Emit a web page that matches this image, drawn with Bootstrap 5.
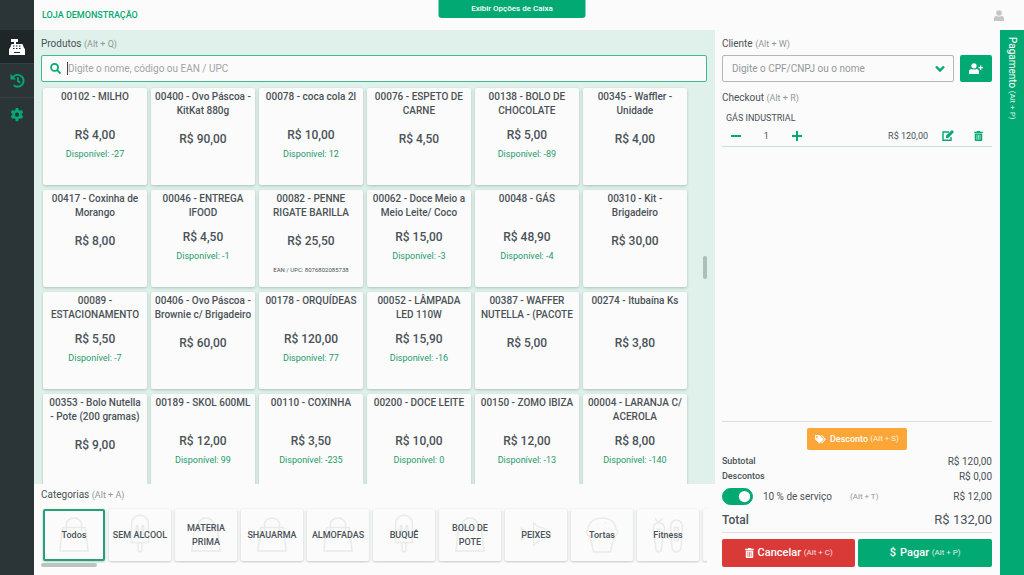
<!DOCTYPE html>
<html lang="pt-BR">
<head>
<meta charset="utf-8">
<meta name="viewport" content="width=device-width, initial-scale=1">
<title>Loja Demonstração - Frente de Caixa</title>
<link href="https://cdn.jsdelivr.net/npm/bootstrap@5.3.0/dist/css/bootstrap.min.css" rel="stylesheet">
<style>
:root{--brand:#03a973;--mint:#dff1ea;--paper:#fbfbfb;--ink:#4a5257;--dim:#92989a}
body{font-family:Roboto,"Liberation Sans",sans-serif;font-size:10px;line-height:14px;color:var(--ink);background:var(--paper)}
button{font-family:inherit;color:inherit}
svg{display:block;fill:currentColor}
.brand{color:var(--brand)}
.rail{width:34px;background:#2b3538}
.rail a{height:34px;color:var(--brand);border-bottom:1px solid #354145}
.rail a.on{background:#1e2628;color:#fff}
.rail-top{height:30px}
.topbar{height:30px}
.store{font-size:9px;font-weight:500}
.drawer-btn{width:147px;height:18px;border:0;border-radius:0 0 3px 3px;background:var(--brand);color:#fff;font-size:8px;font-weight:500;line-height:18px}
.keys{font-size:8px;color:var(--dim);font-weight:400}
.lbl{font-size:10px;font-weight:400;line-height:14px;margin:0}
.lbl .keys{font-size:9px}
.panel{padding-left:7px;padding-right:8px}
.panel>.lbl,.checkout>label{padding-top:7px;padding-bottom:4px}
.products{background:var(--mint)}
.field{height:27px;border-radius:2px;font-size:10px;line-height:14px;background:var(--paper);color:var(--dim)}
.field::placeholder{color:#a0a4a6;opacity:1}
.field:focus{box-shadow:none}
.search{border:1px solid #43b891;padding:0 8px 0 26px}
.search:focus{border-color:#43b891;background:var(--paper)}
.customer{border:1px solid #b4b7b9;padding:0 26px 0 9px;background-image:none}
.in-icon{position:absolute;top:8px}
.caret-line{position:absolute;left:26px;top:7px;width:1px;height:13px;background:#444}
.scroller{padding-top:6px}
.items{display:grid;grid-template-columns:repeat(6,minmax(0,1fr));grid-auto-rows:97px;gap:5px 4px;padding:0 20px 0 2px}
.tile{background:var(--paper);border:0;border-radius:2px;box-shadow:0 1px 3px rgba(30,70,60,.28);padding:0}
.item{display:flex;flex-direction:column;align-items:center;padding-top:2px;font-weight:500;white-space:nowrap}
.item span{height:28px}
.item b{font-size:12px;font-weight:500;line-height:16px;margin-top:13px}
.item.stock b{margin-top:9px}
.item em{font-style:normal;font-weight:400;font-size:9px;line-height:12px;margin-top:5px;color:#1f9a6b}
.item small{font-size:6px;font-weight:400;line-height:8px;margin-top:17px}
.thumb{width:4px;height:23px;border-radius:2px;background:#adbfb9;position:absolute;right:8px;top:226px}
.categories{padding-top:4px;padding-bottom:8px}
.cats{gap:4px;padding:3px 2px 2px}
.cat{flex:0 0 62px;height:52px;font-size:9px;font-weight:500;position:relative}
.cat svg{position:absolute;left:15px;top:5px;width:32px;height:40px;fill:none;stroke:#e9ebeb;stroke-width:1.6}
.cat span{position:relative}
.cat.on{border:2px solid #25a078}
.cat.on svg{left:13px;top:3px}
.hbar{width:56px;height:4px;border-radius:2px;background:#bcc4c2}
.checkout{width:28.8%;padding:0 8px 8px 7px}
.btn-x{border:0;border-radius:2px;color:#fff;font-size:11px;font-weight:500;display:flex;align-items:center;justify-content:center}
.btn-x .keys{color:inherit;opacity:.85}
.cli{gap:6px}
.add{width:32px;height:27px;background:var(--brand)}
.chk{padding:9px 0 6px}
.prod{font-size:9px}
.qty{border-bottom:1px solid #bfe4d8;font-size:9px;height:22px;padding:0 9px}
.qty button{border:0;background:none;padding:0;color:var(--brand)}
.qty output{width:51px;text-align:center}
.qty .edit{margin:0 20px 0 14px}
.sum{border-top:1px solid #dcdfe0;padding:6px 0 4px}
.off{width:100px;height:22px;background:#fba637;font-size:9px}
.row-line{display:flex;justify-content:space-between;line-height:15px}
.row-line dt{font-size:9px;font-weight:500}
.row-line dd{margin:0;font-size:10px}
.sw{min-height:0;height:24px;padding:0;margin:0}
.sw .form-check-input{width:31px;height:17px;margin:0 10px 0 0;float:none;border-color:var(--brand);background-color:var(--brand)}
.sw label{font-size:10px}
.sw .keys{margin-left:18px}
.row-line.total{line-height:24px;border-bottom:1px solid #dcdfe0}
.row-line.total dt{font-size:12px}
.row-line.total dd{font-size:13px}
.acts{gap:3px;padding-top:6px}
.act{height:28px;flex:1}
.act.no{background:#d93a37}
.act.ok{background:var(--brand)}
.pay{width:24px;background:var(--brand);color:#fff;writing-mode:vertical-rl;padding:7px 0 0;border:0;text-align:left;line-height:24px;font-size:10px}
.pay .keys{color:#d5f2e7}
.account{color:#c4c6c7;padding-right:20px}
</style>
</head>
<body>
<svg width="0" height="0" class="position-absolute" aria-hidden="true">
  <symbol id="bag" viewBox="0 0 34 42"><path d="M5 14h24l3 25H2zM9 19v-8a8 7 0 0 1 16 0v8"/></symbol>
  <symbol id="pop" viewBox="0 0 34 42"><path d="M8 30V10a9 9 0 0 1 18 0v20zM15 30v8a2 2 0 0 0 4 0v-8M13 22v-9a1 1 0 0 1 2 0v9M19 22v-9a1 1 0 0 1 2 0v9"/></symbol>
  <symbol id="fish" viewBox="0 0 40 42"><path d="M1 13l8 6 8-2V7l6 5q11 2 16 9-5 7-16 9l-6 5V25l-8-2-8 6 4-8z"/></symbol>
  <symbol id="cake" viewBox="0 0 34 42"><path d="M4 23a4 4 0 0 1-2-7C3 8 9 4 17 4s14 4 15 12a4 4 0 0 1-2 7l-4 17H8zM4 23h26M12 11h1M20 9h1M24 15h1"/></symbol>
  <symbol id="veg" viewBox="0 0 34 42"><path d="M7 9c-5 0-6 4-5 9l2 18a3 4 0 0 0 6 0l3-18c1-5-1-9-6-9zM7 9L3 4M7 9l4-5M26 6c-5 0-7 5-6 10l1 18a5 6 0 0 0 10 0l1-18c1-5-1-10-6-10zM5 16h4M24 14h4v14h-4z"/></symbol>
  <symbol id="trash" viewBox="0 0 14 16"><path fill-rule="evenodd" d="M5 0h4l1 1h4v2H0V1h4zM1 4h12v10.500q0 1.500-1.500 1.500h-9Q1 16 1 14.500zM4 6v8h1V6zm2.500 0v8h1V6zM9 6v8h1V6z"/></symbol>
</svg>
<div class="d-flex vh-100 overflow-hidden">
  <nav class="rail flex-shrink-0" aria-label="Principal">
    <div class="rail-top"></div>
    <a href="#caixa" class="on d-flex align-items-center justify-content-center" aria-label="Caixa"><svg width="16" height="16" viewBox="0 0 16 16"><path fill-rule="evenodd" d="M2 0h7v3H7v2h6.500L15 9l1 1v6H0v-6l1-1 1.500-4H5V3H2zM4 6.500v1h1.500v-1zm3 0v1h1.500v-1zm3 0v1h1.500v-1zM4 9v1h1.500V9zm3 0v1h1.500V9zm3 0v1h1.500V9zM5 13v1h6v-1z"/></svg></a>
    <a href="#historico" class="d-flex align-items-center justify-content-center" aria-label="Histórico"><svg width="15" height="15" viewBox="0 0 16 16"><path fill="none" stroke="currentColor" stroke-width="2" d="M3.200 4.500A6.300 6.300 0 1 1 4 13M8.500 4.500v4l2.500 1.800"/><path d="M.5.8v6h6z"/></svg></a>
    <a href="#config" class="d-flex align-items-center justify-content-center border-0" aria-label="Configurações"><svg width="14" height="14" viewBox="0 0 16 16"><path fill-rule="evenodd" d="M6.500 0h3l.4 2.200 1.600.9 2.100-.8 1.500 2.700-1.700 1.400v1.900l1.700 1.400-1.500 2.700-2.100-.8-1.600.9-.4 2.500h-3l-.4-2.500-1.600-.9-2.100.8L.9 9.700l1.700-1.400V6.400L.9 5l1.500-2.700 2.100.8 1.600-.9zM8 5a2.500 2.500 0 1 0 0 5 2.500 2.500 0 0 0 0-5z"/></svg></a>
  </nav>
  <div class="flex-grow-1 d-flex flex-column overflow-hidden">
    <header class="topbar d-flex align-items-center justify-content-between ps-2 flex-shrink-0">
      <span class="store brand">LOJA DEMONSTRAÇÃO</span>
      <button type="button" class="drawer-btn position-absolute top-0 start-50 translate-middle-x p-0">Exibir Opções de Caixa</button>
      <a href="#conta" aria-label="Conta" class="account"><svg width="10" height="11" viewBox="0 0 10 11"><circle cx="5" cy="3" r="2.800"/><path d="M0 11V8.500Q0 6 2.500 6q2.500 1 5 0Q10 6 10 8.500V11z"/></svg></a>
    </header>
    <div class="d-flex flex-grow-1 overflow-hidden">
      <main class="d-flex flex-column flex-grow-1 overflow-hidden">
        <section class="products panel flex-grow-1 overflow-hidden d-flex flex-column position-relative">
          <label for="busca" class="lbl">Produtos <span class="keys">(Alt + Q)</span></label>
          <div class="position-relative flex-shrink-0">
            <input id="busca" type="text" class="form-control field search" placeholder="Digite o nome, código ou EAN / UPC">
            <svg class="in-icon brand" style="left:9px" width="11" height="11" viewBox="0 0 12 12"><path fill="none" stroke="currentColor" stroke-width="2" d="M8 8l3.500 3.500M5 1a3.800 3.800 0 1 0 0 7.600A3.800 3.800 0 0 0 5 1z"/></svg>
            <span class="caret-line"></span>
          </div>
          <div class="scroller overflow-hidden flex-grow-1"><div class="items">
            <button type="button" class="tile item stock"><span>00102 - MILHO</span><b>R$ 4,00</b><em>Disponível: -27</em></button>
            <button type="button" class="tile item"><span>00400 - Ovo Páscoa -<br>KitKat 880g</span><b>R$ 90,00</b></button>
            <button type="button" class="tile item stock"><span>00078 - coca cola 2l</span><b>R$ 10,00</b><em>Disponível: 12</em></button>
            <button type="button" class="tile item"><span>00076 - ESPETO DE<br>CARNE</span><b>R$ 4,50</b></button>
            <button type="button" class="tile item stock"><span>00138 - BOLO DE<br>CHOCOLATE</span><b>R$ 5,00</b><em>Disponível: -89</em></button>
            <button type="button" class="tile item"><span>00345 - Waffler -<br>Unidade</span><b>R$ 4,00</b></button>
            <button type="button" class="tile item"><span>00417 - Coxinha de<br>Morango</span><b>R$ 8,00</b></button>
            <button type="button" class="tile item stock"><span>00046 - ENTREGA<br>IFOOD</span><b>R$ 4,50</b><em>Disponível: -1</em></button>
            <button type="button" class="tile item"><span>00082 - PENNE<br>RIGATE BARILLA</span><b>R$ 25,50</b><small>EAN / UPC: 8076802085738</small></button>
            <button type="button" class="tile item stock"><span>00062 - Doce Meio a<br>Meio Leite/ Coco</span><b>R$ 15,00</b><em>Disponível: -3</em></button>
            <button type="button" class="tile item stock"><span>00048 - GÁS</span><b>R$ 48,90</b><em>Disponível: -4</em></button>
            <button type="button" class="tile item"><span>00310 - Kit -<br>Brigadeiro</span><b>R$ 30,00</b></button>
            <button type="button" class="tile item stock"><span>00089 -<br>ESTACIONAMENTO</span><b>R$ 5,50</b><em>Disponível: -7</em></button>
            <button type="button" class="tile item"><span>00406 - Ovo Páscoa -<br>Brownie c/ Brigadeiro</span><b>R$ 60,00</b></button>
            <button type="button" class="tile item stock"><span>00178 - ORQUÍDEAS</span><b>R$ 120,00</b><em>Disponível: 77</em></button>
            <button type="button" class="tile item stock"><span>00052 - LÂMPADA<br>LED 110W</span><b>R$ 15,90</b><em>Disponível: -16</em></button>
            <button type="button" class="tile item"><span>00387 - WAFFER<br>NUTELLA - (PACOTE</span><b>R$ 5,00</b></button>
            <button type="button" class="tile item"><span>00274 - Itubaína Ks</span><b>R$ 3,80</b></button>
            <button type="button" class="tile item"><span>00353 - Bolo Nutella<br>- Pote (200 gramas)</span><b>R$ 9,00</b></button>
            <button type="button" class="tile item stock"><span>00189 - SKOL 600ML</span><b>R$ 12,00</b><em>Disponível: 99</em></button>
            <button type="button" class="tile item stock"><span>00110 - COXINHA</span><b>R$ 3,50</b><em>Disponível: -235</em></button>
            <button type="button" class="tile item stock"><span>00200 - DOCE LEITE</span><b>R$ 10,00</b><em>Disponível: 0</em></button>
            <button type="button" class="tile item stock"><span>00150 - ZOMO IBIZA</span><b>R$ 12,00</b><em>Disponível: -13</em></button>
            <button type="button" class="tile item stock"><span>00004 - LARANJA C/<br>ACEROLA</span><b>R$ 8,00</b><em>Disponível: -140</em></button>
          </div></div>
          <span class="thumb"></span>
        </section>
        <section class="flex-shrink-0 panel categories">
          <h2 class="lbl p-0">Categorias <span class="keys">(Alt + A)</span></h2>
          <div class="cats d-flex overflow-hidden mt-1">
            <button type="button" class="tile cat on"><svg><use href="#bag"/></svg><span>Todos</span></button>
            <button type="button" class="tile cat"><svg><use href="#pop"/></svg><span>SEM ALCOOL</span></button>
            <button type="button" class="tile cat"><svg><use href="#bag"/></svg><span>MATERIA<br>PRIMA</span></button>
            <button type="button" class="tile cat"><svg><use href="#bag"/></svg><span>SHAUARMA</span></button>
            <button type="button" class="tile cat"><svg><use href="#bag"/></svg><span>ALMOFADAS</span></button>
            <button type="button" class="tile cat"><svg><use href="#pop"/></svg><span>BUQUÊ</span></button>
            <button type="button" class="tile cat"><svg><use href="#bag"/></svg><span>BOLO DE<br>POTE</span></button>
            <button type="button" class="tile cat"><svg><use href="#fish"/></svg><span>PEIXES</span></button>
            <button type="button" class="tile cat"><svg><use href="#cake"/></svg><span>Tortas</span></button>
            <button type="button" class="tile cat"><svg><use href="#veg"/></svg><span>Fitness</span></button>
            <button type="button" class="tile cat" aria-label="Mais"></button>
          </div>
          <div class="hbar"></div>
        </section>
      </main>
      <aside class="checkout flex-shrink-0 d-flex flex-column">
        <label for="cliente" class="lbl">Cliente <span class="keys">(Alt + W)</span></label>
        <div class="d-flex cli">
          <div class="position-relative flex-grow-1">
            <select id="cliente" class="form-select field customer"><option>Digite o CPF/CNPJ ou o nome</option></select>
            <svg class="in-icon brand" style="right:9px" width="10" height="11" viewBox="0 0 10 11"><path fill="none" stroke="currentColor" stroke-width="2.400" d="M1 3.500l4 4 4-4"/></svg>
          </div>
          <button type="button" class="btn-x add" aria-label="Adicionar cliente"><svg width="14" height="11" viewBox="0 0 14 11"><circle cx="5" cy="2.800" r="2.600"/><path d="M0 11V9q0-3 2.500-3 2.500 1 5 0Q10 6 10 9v2zM11 2.500h1.300V4H14v1.300h-1.700V7H11V5.300H9.500V4H11z"/></svg></button>
        </div>
        <h2 class="lbl chk">Checkout <span class="keys">(Alt + R)</span></h2>
        <div class="prod ps-1">GÁS INDUSTRIAL</div>
        <div class="qty d-flex align-items-center">
          <button type="button" aria-label="Diminuir"><svg width="10" height="10" viewBox="0 0 10 10"><path d="M0 4h10v2H0z"/></svg></button>
          <output>1</output>
          <button type="button" aria-label="Aumentar"><svg width="10" height="10" viewBox="0 0 10 10"><path d="M4 0h2v4h4v2H6v4H4V6H0V4h4z"/></svg></button>
          <span class="ms-auto">R$ 120,00</span>
          <button type="button" aria-label="Editar" class="edit"><svg width="12" height="11" viewBox="0 0 12 11"><path fill="none" stroke="currentColor" stroke-width="1.400" d="M7 2H1v8.300h8V7"/><path d="M10 0l2 2-5.800 6H4V5.800z"/></svg></button>
          <button type="button" aria-label="Excluir"><svg width="9" height="10"><use href="#trash"/></svg></button>
        </div>
        <div class="sum mt-auto d-flex justify-content-center"><button type="button" class="btn-x off"><svg class="me-1" width="11" height="9" viewBox="0 0 12 10"><path fill-rule="evenodd" d="M0 0h5l4.500 5L5 9.500 0 5zM2 1.200a1 1 0 1 0 0 2 1 1 0 0 0 0-2zM6.300 0H7.500l4.500 5L7.500 9.500l-.8-.7L10.500 5z"/></svg>Desconto&nbsp;<span class="keys">(Alt + S)</span></button></div>
        <dl class="m-0">
          <div class="row-line"><dt>Subtotal</dt><dd>R$ 120,00</dd></div>
          <div class="row-line"><dt>Descontos</dt><dd>R$ 0,00</dd></div>
          <div class="row-line align-items-center"><dt class="sw form-check form-switch d-flex align-items-center fw-normal"><input class="form-check-input" type="checkbox" role="switch" id="servico" checked><label for="servico">10 % de serviço</label><span class="keys">(Alt + T)</span></dt><dd>R$ 12,00</dd></div>
          <div class="row-line total"><dt>Total</dt><dd>R$ 132,00</dd></div>
        </dl>
        <div class="acts d-flex">
          <button type="button" class="btn-x act no"><svg class="me-1" width="9" height="10"><use href="#trash"/></svg>Cancelar&nbsp;<span class="keys">(Alt + C)</span></button>
          <button type="button" class="btn-x act ok"><span class="me-1">$</span>Pagar&nbsp;<span class="keys">(Alt + P)</span></button>
        </div>
      </aside>
      <button type="button" class="pay flex-shrink-0">Pagamento <span class="keys">(Alt + P)</span></button>
    </div>
  </div>
</div>
<script src="https://cdn.jsdelivr.net/npm/bootstrap@5.3.0/dist/js/bootstrap.bundle.min.js"></script>
</body>
</html>
